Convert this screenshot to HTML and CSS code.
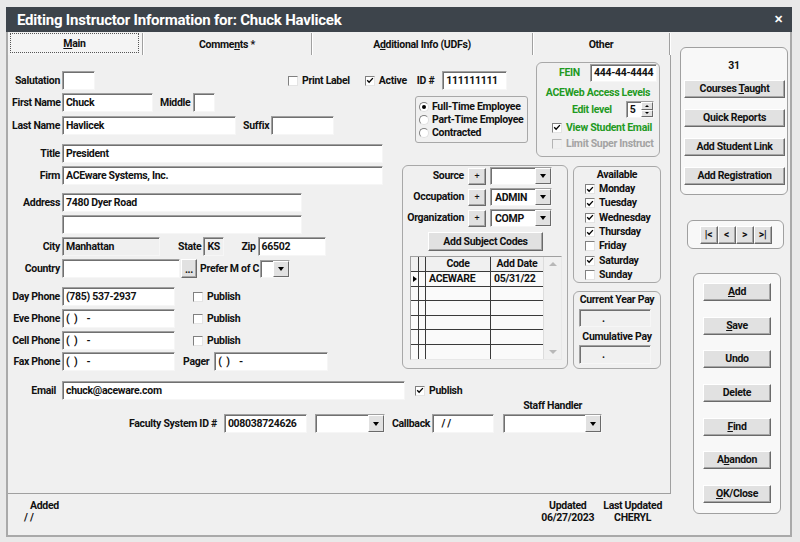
FILE: index.html
```html
<!DOCTYPE html>
<html lang="en">
<head>
<meta charset="utf-8">
<title>Editing Instructor Information</title>
<link rel="stylesheet" href="styles.css">
</head>
<body>
<div class="window">
  <div class="titlebar">
    <span class="title">Editing Instructor Information for: Chuck Havlicek</span>
    <span class="close">✕</span>
  </div>
  <div class="body">
    <div class="tabctl">
      <div class="tabs">
        <div class="tab t-main"><span class="focus"><span><u>M</u>ain</span></span></div>
        <div class="tab t-comments"><span>Comme<u>n</u>ts *</span></div>
        <div class="tab t-add"><span>A<u>d</u>ditional Info (UDFs)</span></div>
        <div class="tab t-other"><span>Other</span></div>
      </div>
      <div class="page">
        <div class="upper">
          <div class="leftcol">
            <div class="row first">
              <span class="lw">Salutation</span><span class="in w33"></span>
              <span class="chk ml193"><span class="box"></span>Print Label</span>
              <span class="chk ml15"><span class="box"><svg class="ck" viewBox="0 0 10 10"><path d="M1.5 4.6 L3.9 7.2 L8.6 2"/></svg></span>Active</span>
              <span class="ml10">ID #</span><span class="in w65 ml8">111111111</span>
            </div>
            <div class="row">
              <span class="lw">First Name</span><span class="in w91">Chuck</span>
              <span class="ml7">Middle</span><span class="in w22 ml3"></span>
            </div>
            <div class="row mt4">
              <span class="lw">Last Name</span><span class="in w174">Havlicek</span>
              <span class="ml7">Suffix</span><span class="in w63"></span>
            </div>
            <div class="row mt9"><span class="lw">Title</span><span class="in w321">President</span></div>
            <div class="row"><span class="lw">Firm</span><span class="in w321">ACEware Systems, Inc.</span></div>
            <div class="row mt8"><span class="lw">Address</span><span class="in w240">7480 Dyer Road</span></div>
            <div class="row"><span class="lw"></span><span class="in w240"></span></div>
            <div class="row">
              <span class="lw">City</span><span class="in w98 ro">Manhattan</span>
              <span class="ml18">State</span><span class="in w21 ro">KS</span>
              <span class="ml17">Zip</span><span class="in w68">66502</span>
            </div>
            <div class="row">
              <span class="lw">Country</span><span class="in w118"></span>
              <span class="btn dots">...</span>
              <span class="ml3">Prefer M of C</span>
              <span class="dd w30 ml1"><span class="v"></span><span class="arr"></span></span>
            </div>
            <div class="row mt9">
              <span class="lw">Day Phone</span><span class="in w113">(785) 537-2937</span>
              <span class="chk ml18"><span class="box"></span>Publish</span>
            </div>
            <div class="row">
              <span class="lw">Eve Phone</span><span class="in w113">(  )    -</span>
              <span class="chk ml18"><span class="box"></span>Publish</span>
            </div>
            <div class="row">
              <span class="lw">Cell Phone</span><span class="in w113">(  )    -</span>
              <span class="chk ml18"><span class="box"></span>Publish</span>
            </div>
            <div class="row mt2">
              <span class="lw">Fax Phone</span><span class="in w113">(  )    -</span>
              <span class="ml8">Pager</span><span class="in w114 ml5">(  )    -</span>
            </div>
          </div>
          <div class="rightarea">
            <div class="rtop">
              <div class="radiohold">
                <div class="radiobox">
                  <div class="radio"><span class="rb on"></span>Full-Time Employee</div>
                  <div class="radio"><span class="rb"></span>Part-Time Employee</div>
                  <div class="radio"><span class="rb"></span>Contracted</div>
                </div>
              </div>
              <div class="gbox fein">
                <div class="feinrow"><span class="green">FEIN</span><span class="in w67 ml10 h18">444-44-4444</span></div>
                <div class="green acelv">ACEWeb Access Levels</div>
                <div class="editrow">
                  <span class="green">Edit level</span>
                  <span class="spin"><span class="sv">5</span><span class="sbtns"><span class="sb"><span class="tu"></span></span><span class="sb"><span class="td"></span></span></span></span>
                </div>
                <div class="chk green vse"><span class="box"><svg class="ck" viewBox="0 0 10 10"><path d="M1.5 4.6 L3.9 7.2 L8.6 2"/></svg></span>View Student Email</div>
                <div class="chk dis lsi"><span class="box"></span>Limit Super Instruct</div>
              </div>
            </div>
            <div class="rbottom">
              <div class="gbox srcbox">
                <div class="srow first">
                  <span class="slbl">Source</span><span class="btn plus">+</span>
                  <span class="dd w62 ml4"><span class="v"></span><span class="arr"></span></span>
                </div>
                <div class="srow">
                  <span class="slbl">Occupation</span><span class="btn plus">+</span>
                  <span class="dd w62 ml4"><span class="v">ADMIN</span><span class="arr"></span></span>
                </div>
                <div class="srow">
                  <span class="slbl">Organization</span><span class="btn plus">+</span>
                  <span class="dd w62 ml4"><span class="v">COMP</span><span class="arr"></span></span>
                </div>
                <div class="btn subj"><span>Add Subject Codes</span></div>
                <div class="grid">
                  <div class="gtable">
                    <div class="grow ghead">
                      <span class="gc c1"></span><span class="gc c2"></span><span class="gc c3">Code</span><span class="gc c4">Add Date</span>
                    </div>
                    <div class="grow">
                      <span class="gc c1"><span class="ptr"></span></span><span class="gc c2"></span><span class="gc c3 tl">ACEWARE</span><span class="gc c4 tl">05/31/22</span>
                    </div>
                    <div class="grow"><span class="gc c1"></span><span class="gc c2"></span><span class="gc c3"></span><span class="gc c4"></span></div>
                    <div class="grow"><span class="gc c1"></span><span class="gc c2"></span><span class="gc c3"></span><span class="gc c4"></span></div>
                    <div class="grow"><span class="gc c1"></span><span class="gc c2"></span><span class="gc c3"></span><span class="gc c4"></span></div>
                    <div class="grow"><span class="gc c1"></span><span class="gc c2"></span><span class="gc c3"></span><span class="gc c4"></span></div>
                    <div class="grow last"><span class="gc c1"></span><span class="gc c2"></span><span class="gc c3"></span><span class="gc c4"></span></div>
                  </div>
                  <div class="gscroll"><span class="su"></span><span class="sd"></span></div>
                </div>
              </div>
              <div class="rcol">
                <div class="gbox avail">
                  <div class="avh">Available</div>
                  <div class="chk day"><span class="box"><svg class="ck" viewBox="0 0 10 10"><path d="M1.5 4.6 L3.9 7.2 L8.6 2"/></svg></span>Monday</div>
                  <div class="chk day"><span class="box"><svg class="ck" viewBox="0 0 10 10"><path d="M1.5 4.6 L3.9 7.2 L8.6 2"/></svg></span>Tuesday</div>
                  <div class="chk day"><span class="box"><svg class="ck" viewBox="0 0 10 10"><path d="M1.5 4.6 L3.9 7.2 L8.6 2"/></svg></span>Wednesday</div>
                  <div class="chk day"><span class="box"><svg class="ck" viewBox="0 0 10 10"><path d="M1.5 4.6 L3.9 7.2 L8.6 2"/></svg></span>Thursday</div>
                  <div class="chk day"><span class="box"></span>Friday</div>
                  <div class="chk day"><span class="box"><svg class="ck" viewBox="0 0 10 10"><path d="M1.5 4.6 L3.9 7.2 L8.6 2"/></svg></span>Saturday</div>
                  <div class="chk day"><span class="box"></span>Sunday</div>
                </div>
                <div class="gbox pay">
                  <div class="payh first">Current Year Pay</div>
                  <div class="in payv">.</div>
                  <div class="payh">Cumulative Pay</div>
                  <div class="in payv p2">.</div>
                </div>
              </div>
            </div>
          </div>
        </div>
        <div class="row emailrow">
          <span class="lw pr4">Email</span><span class="in w343">chuck@aceware.com</span>
          <span class="chk ml10"><span class="box"><svg class="ck" viewBox="0 0 10 10"><path d="M1.5 4.6 L3.9 7.2 L8.6 2"/></svg></span>Publish</span>
        </div>
        <div class="facrow">
          <span class="fl ml117">Faculty System ID #</span>
          <span class="in w83 ml7">008038724626</span>
          <span class="dd w70 ml8 h19"><span class="v"></span><span class="arr"></span></span>
          <span class="fl ml7">Callback</span>
          <span class="in w62 ml2 cb"> / /</span>
          <span class="staffcol">
            <span class="staffl">Staff Handler</span>
            <span class="dd w99 h19"><span class="v"></span><span class="arr"></span></span>
          </span>
        </div>
      </div>
      <div class="status">
        <div class="st-added"><div class="st-h">Added</div><div>/ /</div></div>
        <div class="st-right">
          <div class="st-c"><div>Updated</div><div>06/27/2023</div></div>
          <div class="st-c"><div>Last Updated</div><div>CHERYL</div></div>
        </div>
      </div>
    </div>
    <div class="sidebar">
      <div class="rbox topbox">
        <div class="count">31</div>
        <div class="btn sbtn first"><span>Courses <u>T</u>aught</span></div>
        <div class="btn sbtn"><span>Quick Reports</span></div>
        <div class="btn sbtn"><span>Add Student Link</span></div>
        <div class="btn sbtn"><span>Add Registration</span></div>
      </div>
      <div class="rbox navbox">
        <span class="btn nb">|&lt;</span><span class="btn nb">&lt;</span><span class="btn nb">&gt;</span><span class="btn nb">&gt;|</span>
      </div>
      <div class="rbox actbox">
        <div class="btn abtn"><span><u>A</u>dd</span></div>
        <div class="btn abtn"><span><u>S</u>ave</span></div>
        <div class="btn abtn"><span>Undo</span></div>
        <div class="btn abtn"><span>Delete</span></div>
        <div class="btn abtn"><span><u>F</u>ind</span></div>
        <div class="btn abtn"><span>A<u>b</u>andon</span></div>
        <div class="btn abtn"><span><u>O</u>K/Close</span></div>
      </div>
    </div>
  </div>
</div>
</body>
</html>
```

FILE: styles.css
```css
* { box-sizing: border-box; margin: 0; padding: 0; }
html, body { width: 800px; height: 542px; overflow: hidden; }
body {
  background: #e9e9e9;
  font-family: Roboto, "Liberation Sans", Arial, sans-serif;
  font-size: 10.5px;
  font-weight: 700;
  letter-spacing: -0.3px;
  color: #111;
  line-height: 12px;
}
u { text-decoration: underline; text-underline-offset: 1px; }

.window { margin: 7px 0 0 6px; width: 786px; height: 530px; display: flex; flex-direction: column; }
.titlebar {
  height: 25px; flex: none; background: #3d444b; color: #fff;
  display: flex; align-items: center; justify-content: space-between;
  padding: 0 9px 0 11px;
}
.title { font-size: 15px; font-weight: 700; letter-spacing: -0.2px; }
.close { font-size: 11px; font-weight: 700; }

.body { flex: 1; display: flex; background: #f0f0f0; border: 2px solid #a9a9a9; border-top: 0; }

.tabctl { width: 663px; flex: none; display: flex; flex-direction: column; }
.tabs { display: flex; height: 22px; margin-top: 1px; }
.tab {
  display: flex; align-items: center; justify-content: center; padding-top: 2px;
  border-right: 1px solid #a0a0a0; box-shadow: 1px 0 0 #fff;
}
.t-main { width: 135px; justify-content: flex-start; padding-left: 2px; padding-top: 0; background: #f4f4f4; }
.focus {
  width: 129px; height: 20px; border: 1px dotted #555;
  display: flex; align-items: center; justify-content: center; margin-top: -2px; padding-top: 2px;
}
.t-comments { width: 169px; }
.t-add { width: 221px; }
.t-other { width: 137px; }

.page {
  height: 439px; border-right: 1px solid #a0a0a0; border-bottom: 1px solid #a0a0a0;
  padding: 7px 0 0 4px; display: flex; flex-direction: column;
}
.upper { display: flex; }
.leftcol { width: 390px; flex: none; padding-top: 9px; }

.row { display: flex; align-items: center; height: 19px; margin-top: 3px; white-space: nowrap; }
.row.first { margin-top: 0; }
.row > * { flex: none; }
.mt2 { margin-top: 2px; } .mt4 { margin-top: 4px; } .mt8 { margin-top: 8px; } .mt9 { margin-top: 9px; }
.ml1 { margin-left: 1px; } .ml2 { margin-left: 2px; } .ml3 { margin-left: 3px; } .ml4 { margin-left: 4px; }
.ml5 { margin-left: 5px; } .ml7 { margin-left: 7px; } .ml8 { margin-left: 8px; } .ml10 { margin-left: 10px; }
.ml15 { margin-left: 15px; } .ml17 { margin-left: 17px; } .ml18 { margin-left: 18px; }
.ml117 { margin-left: 117px; } .ml193 { margin-left: 193px; }
.pr4 { padding-right: 4px; }

.lw { width: 48px; text-align: right; }
.in {
  display: block; height: 19px; background: #fff;
  border: 1px solid; border-color: #a0a0a0 #f6f6f6 #f6f6f6 #a0a0a0;
  box-shadow: inset 1px 1px 0 #707070;
  padding-left: 3px; line-height: 17px; white-space: pre; overflow: hidden;
  margin-left: 2px;
}
.row .in.ml3 { margin-left: 3px; }
.row .in.ml5 { margin-left: 5px; }
.row .in.ml8 { margin-left: 8px; }
.in.ro { background: #f0f0f0; }
.in.h18 { height: 18px; line-height: 16px; }
.w21 { width: 21px; } .w22 { width: 22px; } .w30 { width: 30px; } .w33 { width: 33px; }
.w62 { width: 62px; } .w63 { width: 63px; } .w65 { width: 65px; } .w67 { width: 67px; } .w68 { width: 68px; }
.w70 { width: 70px; } .w83 { width: 83px; } .w91 { width: 91px; } .w98 { width: 98px; } .w99 { width: 99px; }
.w113 { width: 113px; } .w114 { width: 114px; } .w118 { width: 118px; } .w174 { width: 174px; }
.w240 { width: 240px; } .w321 { width: 321px; } .w343 { width: 343px; }

.chk { display: flex; align-items: center; white-space: nowrap; }
.box {
  width: 10px; height: 10px; flex: none; background: #fff;
  border: 1px solid; border-color: #808080 #e4e4e4 #e4e4e4 #808080;
  margin-right: 4px; display: flex; align-items: center; justify-content: center;
}
.ck { width: 9px; height: 9px; }
.ck path { fill: none; stroke: #000; stroke-width: 1.7; }
.dis { color: #a3a3a3; }
.dis .box { background: #f0f0f0; border-color: #b4b4b4 #ececec #ececec #b4b4b4; }

.btn {
  display: flex; align-items: center; justify-content: center;
  background: #e1e1e1; border: 1px solid; border-color: #fff #6a6a6a #6a6a6a #fff;
  box-shadow: inset -1px -1px 0 #a6a6a6; white-space: nowrap;
}
.dots { width: 16px; height: 19px; margin-left: 1px; align-items: flex-end; padding-bottom: 2px; line-height: 10px; }

.dd {
  display: flex; height: 18px; background: #fff;
  border: 1px solid; border-color: #a0a0a0 #f6f6f6 #f6f6f6 #a0a0a0;
  box-shadow: inset 1px 1px 0 #707070;
}
.dd.h19 { height: 19px; }
.dd .v { flex: 1; padding-left: 4px; line-height: 16px; padding-top: 1px; }
.dd .arr {
  width: 16px; flex: none; display: flex; align-items: center; justify-content: center;
  background: #e1e1e1; border: 1px solid; border-color: #fff #6a6a6a #6a6a6a #fff;
}
.dd .arr::after {
  content: ""; width: 0; height: 0;
  border-left: 3.5px solid transparent; border-right: 3.5px solid transparent; border-top: 4px solid #000;
}

/* right area of the page */
.rightarea { width: 259px; flex: none; }
.rtop { display: flex; }
.radiohold { width: 134px; flex: none; padding: 34px 0 0 13px; }
.radiobox {
  width: 113px; height: 47px; border: 1px solid #a8a8a8; border-radius: 3px;
  padding: 3px 0 0 3px;
}
.radio { display: flex; align-items: center; height: 13.4px; white-space: nowrap; }
.rb {
  width: 10px; height: 10px; border-radius: 50%; background: #fff; flex: none;
  border: 1px solid; border-color: #808080 #e0e0e0 #e0e0e0 #808080; margin-right: 3px;
  display: flex; align-items: center; justify-content: center;
}
.rb.on::after { content: ""; width: 4px; height: 4px; border-radius: 50%; background: #000; }

.gbox { border: 1px solid #a8a8a8; border-radius: 6px; }
.green { color: #1f9a1f; }
.fein { width: 124px; height: 95px; padding-top: 1px; }
.feinrow { display: flex; align-items: center; padding-left: 22px; }
.feinrow .in { flex: none; margin-left: 10px; }
.acelv { text-align: center; margin-top: 5px; line-height: 12px; }
.editrow { display: flex; align-items: center; padding-left: 35px; margin-top: 2px; }
.spin {
  margin-left: 14px; width: 28px; height: 17px; display: flex; background: #fff;
  border: 1px solid; border-color: #a0a0a0 #f6f6f6 #f6f6f6 #a0a0a0; box-shadow: inset 1px 1px 0 #707070;
}
.sv { flex: 1; padding-left: 3px; line-height: 15px; }
.sbtns { width: 12px; display: flex; flex-direction: column; }
.sb {
  flex: 1; background: #e1e1e1; border: 1px solid; border-color: #fff #6a6a6a #6a6a6a #fff;
  display: flex; align-items: center; justify-content: center;
}
.tu { width: 0; height: 0; border-left: 2px solid transparent; border-right: 2px solid transparent; border-bottom: 2px solid #000; }
.td { width: 0; height: 0; border-left: 2px solid transparent; border-right: 2px solid transparent; border-top: 2px solid #000; }
.vse { padding-left: 15px; margin-top: 3px; height: 13px; }
.lsi { padding-left: 15px; margin-top: 3px; height: 13px; }

.rbottom { display: flex; margin-top: 8px; }
.srcbox { width: 166px; height: 204px; flex: none; }
.srow { display: flex; align-items: center; height: 18px; margin-top: 3px; }
.srow.first { margin-top: 1px; }
.slbl { width: 61px; text-align: right; flex: none; }
.plus { width: 18px; height: 17px; margin-left: 4px; font-size: 9px; font-weight: 400; }
.subj { width: 115px; height: 19px; margin: 5px 0 0 25px; }
.grid {
  width: 152px; height: 104px; margin: 5px 0 0 7px; display: flex;
  border: 1px solid; border-color: #a0a0a0 #e8e8e8 #e8e8e8 #a0a0a0;
}
.gtable { width: 132px; display: flex; flex-direction: column; background: #fafafa; }
.grow { display: flex; height: 14.5px; border-bottom: 1px solid #3a3a3a; }
.grow.last { border-bottom: 0; }
.ghead { height: 15px; background: #f0f0f0; }
.gc { border-right: 1px solid #3a3a3a; display: flex; align-items: center; justify-content: center; }
.c1 { width: 8px; } .c2 { width: 7px; } .c3 { width: 65px; } .c4 { width: 52px; border-right: 0; }
.gc.tl { justify-content: flex-start; padding-left: 3px; }
.ptr { width: 0; height: 0; border-top: 3px solid transparent; border-bottom: 3px solid transparent; border-left: 4px solid #000; }
.gscroll {
  width: 18px; background: #f0f0f0; border-left: 1px solid #dcdcdc;
  display: flex; flex-direction: column; align-items: center; justify-content: space-between; padding: 5px 0 5px;
}
.su { width: 0; height: 0; border-left: 4px solid transparent; border-right: 4px solid transparent; border-bottom: 4px solid #b8b8b8; }
.sd { width: 0; height: 0; border-left: 4px solid transparent; border-right: 4px solid transparent; border-top: 4px solid #b8b8b8; }

.rcol { margin-left: 5px; width: 88px; flex: none; }
.avail { height: 117px; padding: 2px 0 0 11px; margin-top: 1px; }
.avh { text-align: center; margin-left: -11px; line-height: 12px; margin-bottom: 1px; }
.day { height: 14.3px; }
.pay { height: 78px; margin-top: 8px; padding-top: 1px; }
.payh { text-align: center; margin-top: 4px; line-height: 12px; white-space: nowrap; }
.payh.first { margin-top: 1px; }
.payv { width: 72px; height: 18px; margin: 3px 0 0 5px; background: #f0f0f0; padding-left: 22px; }
.payv.p2 { height: 19px; margin-top: 2px; }

.emailrow { margin-top: 10px; }
.facrow { display: flex; align-items: flex-end; white-space: nowrap; }
.facrow > * { flex: none; }
.fl { height: 19px; line-height: 19px; }
.facrow .in.ml7 { margin-left: 7px; }
.facrow .in.ml2 { margin-left: 2px; }
.cb { padding-left: 6px; }
.staffcol { display: flex; flex-direction: column; align-items: center; margin-left: 9px; }
.staffl { line-height: 12px; margin-bottom: 2px; }

.status { display: flex; justify-content: space-between; padding: 6px 9px 0 16px; line-height: 12px; }
.st-h { padding-left: 6px; }
.st-right { display: flex; gap: 9px; }
.st-c { text-align: center; }

/* sidebar */
.sidebar { margin-left: 9px; width: 108px; flex: none; }
.rbox { border: 1px solid #a0a0a0; border-radius: 6px; background: #f8f8f8; }
.topbox { margin-top: 15px; height: 148px; padding: 12px 0 0 3px; }
.count { text-align: center; line-height: 12px; margin-left: -3px; }
.sbtn { width: 101px; height: 18px; margin-top: 11px; }
.sbtn.first { margin-top: 8px; }
.navbox {
  width: 97px; height: 29px; margin: 25px 0 0 7px;
  display: flex; align-items: center; justify-content: center;
}
.nb { width: 18px; height: 18px; }
.actbox {
  width: 88px; height: 241px; margin: 24px 0 0 13px;
  display: flex; flex-direction: column; align-items: center; padding-top: 9px; gap: 15.7px;
}
.abtn { width: 68px; height: 18px; }
```
